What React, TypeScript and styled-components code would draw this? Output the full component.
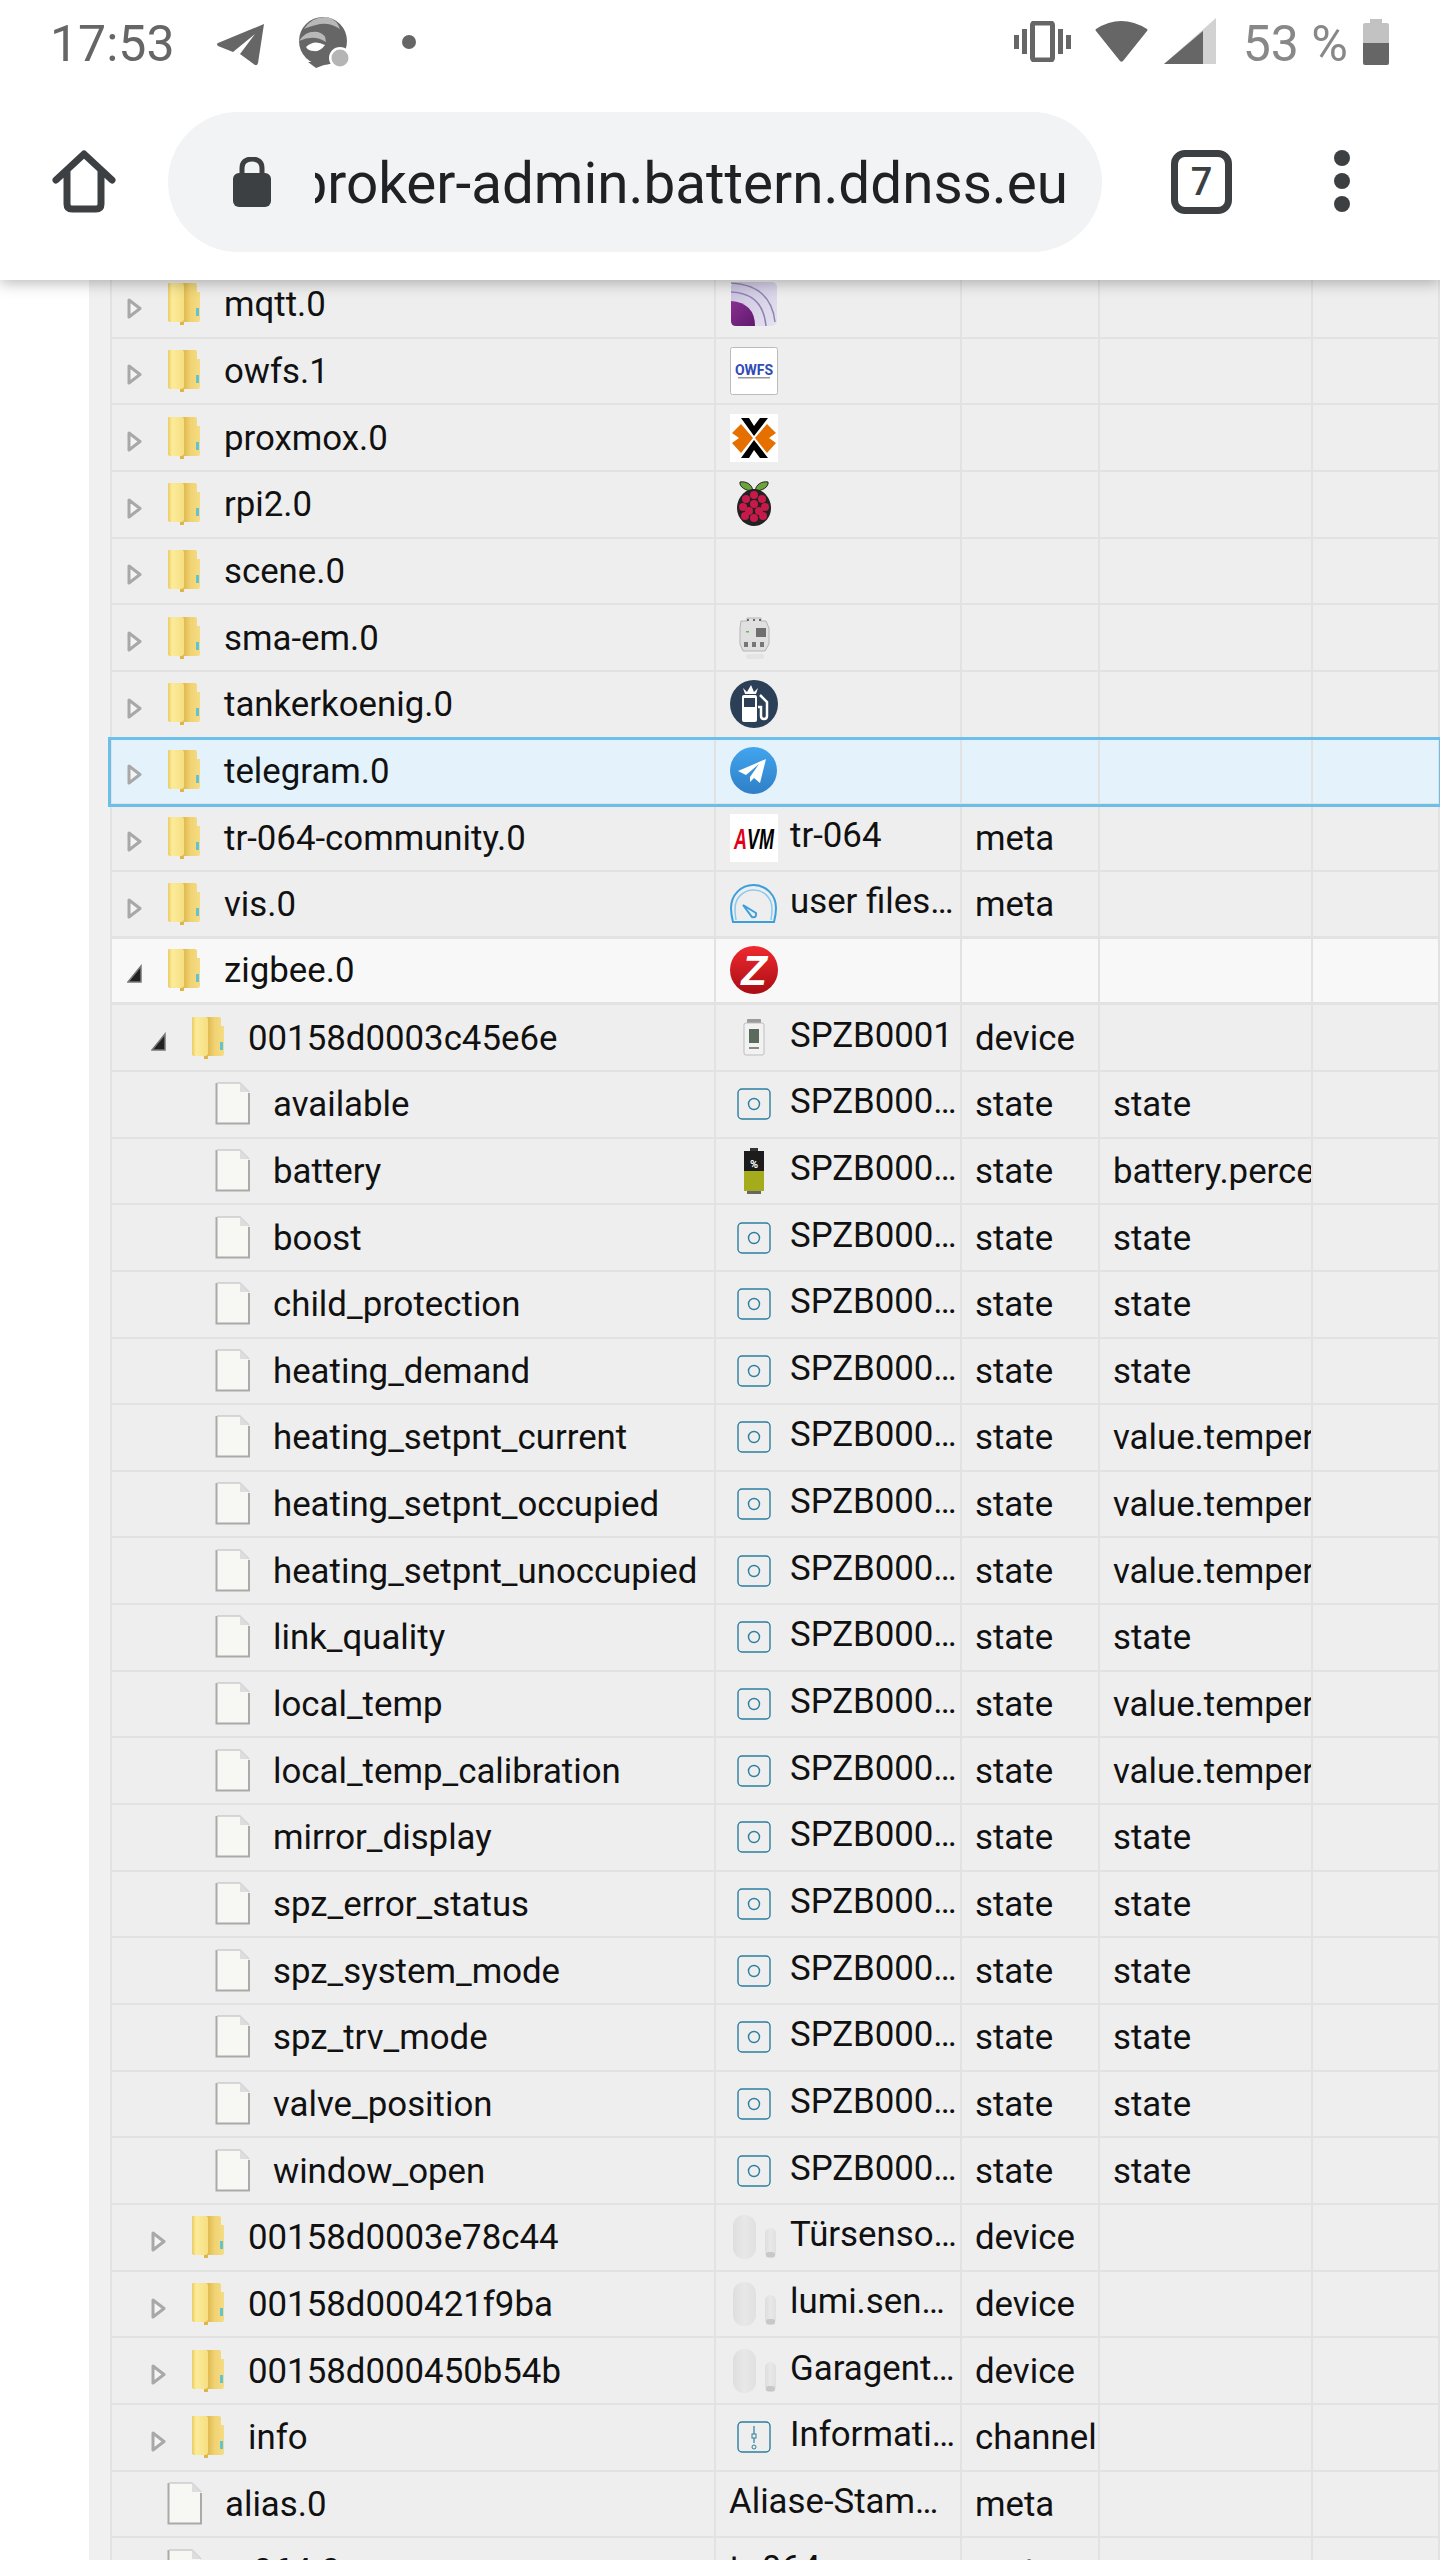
import React from "react";
import styled, { createGlobalStyle } from "styled-components";

const GlobalStyle = createGlobalStyle`
  html, body {
    margin: 0;
    padding: 0;
    background: #fff;
  }
  body {
    font-family: Roboto, "Liberation Sans", sans-serif;
  }
`;

const Page = styled.div`
  width: 1440px;
  height: 2560px;
  overflow: hidden;
  background: #fff;
`;

const Header = styled.header`
  position: relative;
  z-index: 5;
  height: 280px;
  background: #fff;
  box-shadow: 0 3px 14px rgba(0, 0, 0, 0.28);
`;

const StatusBar = styled.div`
  height: 88px;
  display: flex;
  justify-content: space-between;
  align-items: flex-start;
  padding: 0 51px 0 50px;
`;

const StatusGroup = styled.div`
  display: flex;
  align-items: flex-start;
`;

const StatusIcon = styled.svg<{ $left: number; $top: number }>`
  display: block;
  margin-left: ${(p) => p.$left}px;
  margin-top: ${(p) => p.$top}px;
`;

const Time = styled.span`
  font-size: 50px;
  line-height: 56px;
  margin-top: 16px;
  color: #666;
  width: 120px;
`;

const Percent = styled.span`
  font-size: 50px;
  line-height: 56px;
  margin-top: 16px;
  margin-left: 27px;
  color: #888;
  white-space: pre;
`;

const Toolbar = styled.div`
  height: 192px;
  display: flex;
  align-items: flex-start;
  padding: 24px 0 0 52px;
`;

const HomeButton = styled.svg`
  display: block;
  width: 64px;
  height: 64px;
  margin-top: 38px;
`;

const UrlBar = styled.div`
  width: 934px;
  height: 140px;
  margin-left: 52px;
  border-radius: 70px;
  background: #f1f3f4;
  display: flex;
  align-items: center;
  padding-left: 65px;
  box-sizing: border-box;
`;

const Lock = styled.svg`
  display: block;
  flex: none;
`;

const UrlClip = styled.div`
  width: 753px;
  margin: 3px 0 0 44px;
  display: flex;
  justify-content: flex-end;
  overflow: hidden;
`;

const UrlText = styled.span`
  flex: none;
  font-size: 56.6px;
  line-height: 70px;
  color: #202124;
  white-space: nowrap;
`;

const TabCount = styled.div`
  width: 61px;
  height: 64px;
  margin: 38px 0 0 69px;
  box-sizing: border-box;
  border: 7px solid #3c4043;
  border-radius: 14px;
  display: flex;
  align-items: center;
  justify-content: center;
  font-size: 38px;
  font-weight: 500;
  color: #3c4043;
`;

const MenuDots = styled.div`
  margin: 38px 0 0 102px;
  display: flex;
  flex-direction: column;
  gap: 7px;
`;

const MenuDot = styled.span`
  display: block;
  width: 16px;
  height: 16px;
  border-radius: 50%;
  background: #3c4043;
`;

const TableArea = styled.main`
  margin: -8px 0 0 89px;
  padding-left: 21px;
  background: #f0f0f0;
`;

const Row = styled.div<{ $kind?: "selected" | "open" }>`
  height: 66.67px;
  box-sizing: border-box;
  display: grid;
  grid-template-columns: 604px 246px 138px 213px 1fr;
  color: #111;
  font-size: 34.8px;
  background: ${(p) =>
    p.$kind === "selected" ? "#e3f2fb" : p.$kind === "open" ? "#f8f8f8" : "#eeeeee"};
  border-bottom: 2px solid #e2e2e2;
  border-left: 2px solid #e2e2e2;
  ${(p) =>
    p.$kind === "selected"
      ? "position: relative; z-index: 1; outline: 3px solid #6bbfe9; outline-offset: -1px;"
      : ""}
  ${(p) =>
    p.$kind === "open"
      ? "border-bottom-width: 3px; box-shadow: 0 -3px 0 #e2e2e2;"
      : ""}
`;

const Cell = styled.div`
  border-right: 2px solid #e2e2e2;
  min-width: 0;
  display: flex;
  align-items: center;
  overflow: hidden;
  white-space: nowrap;
`;

const NameCell = styled(Cell)<{ $level: number }>`
  padding-left: ${(p) => 15 + p.$level * 24}px;
`;

const TitleCell = styled(Cell)`
  padding-left: 13px;
`;

const TextCell = styled(Cell)`
  padding-left: 13px;
`;

const ArrowSlot = styled.span`
  flex: none;
  width: 40px;
  height: 24px;
  margin-top: 8px;
  display: flex;
  align-items: center;
`;

const TreeIcon = styled.svg`
  flex: none;
  display: block;
  margin-top: -1px;
`;

const NameText = styled.span`
  margin-left: 23px;
`;

const IconSlot = styled.span`
  flex: none;
  width: 49px;
  height: 48px;
  margin-right: 12px;
  display: flex;
  align-items: center;
  justify-content: center;
`;

const TitleText = styled.span`
  margin-top: -6px;
`;

const Arrow = ({ open }: { open?: boolean }) =>
  open ? (
    <svg width="16" height="20" viewBox="0 0 16 20">
      <path d="M14 2V18H1Z" fill="#222" stroke="#777" strokeWidth="1.5" />
    </svg>
  ) : (
    <svg width="15" height="21" viewBox="0 0 15 21">
      <path d="M2 2L13 10.5L2 19Z" fill="#f4f4f4" stroke="#a8a8a8" strokeWidth="3" strokeLinejoin="round" />
    </svg>
  );

const Folder = () => (
  <TreeIcon width="34" height="43" viewBox="0 0 34 43">
    <defs>
      <linearGradient id="folderBack" x1="0" x2="1" y1="0" y2="0">
        <stop offset="0" stopColor="#eccb62" />
        <stop offset="0.25" stopColor="#fbeb9a" />
        <stop offset="1" stopColor="#f6df82" />
      </linearGradient>
      <linearGradient id="folderFront" x1="0" x2="1" y1="0" y2="0">
        <stop offset="0.45" stopColor="#dcb448" />
        <stop offset="0.7" stopColor="#f0d272" />
        <stop offset="1" stopColor="#f5dc84" />
      </linearGradient>
    </defs>
    <path d="M3 1H28Q30 1 30 3V10H33V38Q33 40 31 40H17V43H13V40H4Q1 40 1 37V3Q1 1 3 1Z" fill="url(#folderFront)" />
    <path d="M3 1H15Q17 1 17 4V37Q17 40 14 40H4Q1 40 1 37V3Q1 1 3 1Z" fill="url(#folderBack)" />
    <rect x="29" y="26" width="3" height="8" fill="#62c3d6" />
  </TreeIcon>
);

const FileIcon = () => (
  <TreeIcon width="35" height="43" viewBox="0 0 35 43">
    <path d="M2 1H25L34 10V41H2Z" fill="#f7f8f4" />
    <path d="M1.500 1V41.500H34V11" fill="none" stroke="#aaa" strokeWidth="2" />
    <path d="M2 1H25L34 10" fill="none" stroke="#ccc" strokeWidth="1.5" />
    <path d="M25 1V10H34Z" fill="#ddd" />
  </TreeIcon>
);

const Mqtt = () => (
  <svg width="46" height="44" viewBox="0 0 46 44">
    <defs>
      <linearGradient id="mqttBg" x1="0" x2="1" y1="0" y2="1">
        <stop offset="0" stopColor="#c8c0de" />
        <stop offset="1" stopColor="#e6e2f0" />
      </linearGradient>
      <linearGradient id="mqttArc" x1="0" x2="1" y1="0" y2="1">
        <stop offset="0" stopColor="#8a2f92" />
        <stop offset="1" stopColor="#5f1a6c" />
      </linearGradient>
    </defs>
    <rect width="46" height="44" rx="5" fill="url(#mqttBg)" />
    <path d="M0 19Q24 21 24 44H5Q0 44 0 39Z" fill="url(#mqttArc)" />
    <path d="M0 10Q32 11 35 44M0 1Q40 3 44 40" fill="none" stroke="#8d84ac" strokeWidth="1.5" />
  </svg>
);

const Owfs = () => (
  <svg width="48" height="48" viewBox="0 0 48 48">
    <rect x="0.5" y="0.5" width="47" height="47" rx="2" fill="#fff" stroke="#bbb" />
    <text x="24" y="28" textAnchor="middle" fontFamily="Roboto" fontSize="14" fontWeight="700" fill="#2f4bb5">
      OWFS
    </text>
    <rect x="8" y="30" width="32" height="1.5" fill="#999" />
  </svg>
);

const Proxmox = () => (
  <svg width="48" height="48" viewBox="0 0 48 48">
    <rect width="48" height="48" fill="#fff" />
    <path d="M11 4H19L24 12L30 4H38L24 22ZM11 44H19L24 36L30 44H38L24 26Z" fill="#000" />
    <path d="M2 19L11 10L23 24L11 39L2 29L9 24ZM46 19L37 10L25 24L37 39L46 29L39 24Z" fill="#e57000" />
  </svg>
);

const Raspberry = () => (
  <svg width="36" height="46" viewBox="0 0 36 46">
    <path d="M17 10C10 10 3 6 4 1C10 0 16 3 17 10ZM19 10C26 10 33 6 32 1C26 0 20 3 19 10Z" fill="#6ba43a" stroke="#222" strokeWidth="1" />
    <path d="M18 8C8 8 1 18 1 27C1 38 10 45 18 45C26 45 35 38 35 27C35 18 28 8 18 8Z" fill="#222" />
    {[
      [18, 14], [10, 18], [26, 18], [18, 23], [7, 26], [29, 26], [13, 30], [23, 30], [18, 37], [9, 35], [27, 35],
    ].map(([x, y]) => (
      <circle key={`${x}-${y}`} cx={x} cy={y} r="4" fill="#c51a4a" />
    ))}
  </svg>
);

const SmaMeter = () => (
  <svg width="32" height="44" viewBox="0 0 32 44">
    <path d="M3 5H9V2H23V5H28L31 12V28L27 35H5L2 28V12Z" fill="#e0e0e0" stroke="#b5b5b5" />
    <rect x="18" y="12" width="10" height="9" fill="#6f6f6f" />
    <circle cx="10" cy="4" r="1" fill="#444" />
    <circle cx="16" cy="4" r="1" fill="#444" />
    <circle cx="22" cy="4" r="1" fill="#444" />
    <rect x="8" y="15" width="3" height="1.5" fill="#56c25b" />
    <path d="M6 26H10V31H6ZM14 26H18V31H14ZM22 26H26V31H22Z" fill="#777" />
    <rect x="8" y="38" width="18" height="5" rx="2" fill="#e4e4e4" />
  </svg>
);

const Tanker = () => (
  <svg width="48" height="48" viewBox="0 0 48 48">
    <circle cx="24" cy="24" r="24" fill="#2b3f56" />
    <path d="M13 8L15 14H26L28 8L24 12L21 5L17 12Z" fill="#fff" />
    <rect x="12" y="15" width="15" height="27" rx="2" fill="#fff" />
    <rect x="14" y="18" width="11" height="9" fill="#2b3f56" />
    <path d="M30 15L37 22V36Q37 39 34 39Q31 39 31 36V27H28" fill="none" stroke="#fff" strokeWidth="2.5" />
  </svg>
);

const Telegram = () => (
  <svg width="47" height="47" viewBox="0 0 47 47">
    <defs>
      <linearGradient id="tgBlue" x1="0" x2="0" y1="0" y2="1">
        <stop offset="0" stopColor="#41a5ed" />
        <stop offset="1" stopColor="#2f7fc7" />
      </linearGradient>
    </defs>
    <circle cx="23.5" cy="23.5" r="23.5" fill="url(#tgBlue)" />
    <path d="M36 12L8 24L16 28L29 17L20 30L20 35L24 31L30 36Z" fill="#fff" />
  </svg>
);

const Avm = () => (
  <svg width="48" height="48" viewBox="0 0 48 48">
    <rect width="48" height="48" fill="#fff" />
    <text transform="translate(4 35) scale(0.6 1)" fontFamily="Liberation Sans" fontSize="30" fontWeight="700" fontStyle="italic">
      <tspan fill="#e2001a">A</tspan>
      <tspan fill="#000">VM</tspan>
    </text>
  </svg>
);

const Gauge = () => (
  <svg width="47" height="40" viewBox="0 0 47 40">
    <path d="M3 38Q1 30 1 24C1 11 11 1 23.500 1S46 11 46 24Q46 30 44 38Z" fill="none" stroke="#3a9fdd" strokeWidth="2" />
    <path d="M6 36Q5 30 5 25C5 14 13 6 23.500 6S42 14 42 25Q42 30 41 36" fill="none" stroke="#8cc9ec" strokeWidth="1.5" />
    <path d="M13 21L26 29Q27 34 22 33Z" fill="none" stroke="#3a9fdd" strokeWidth="2" />
  </svg>
);

const Zigbee = () => (
  <svg width="48" height="48" viewBox="0 0 48 48">
    <defs>
      <linearGradient id="zbRed" x1="0" x2="0" y1="0" y2="1">
        <stop offset="0" stopColor="#ef2a2f" />
        <stop offset="1" stopColor="#a80d14" />
      </linearGradient>
    </defs>
    <circle cx="24" cy="24" r="24" fill="url(#zbRed)" />
    <text x="24" y="39" textAnchor="middle" fontFamily="Liberation Sans" fontSize="42" fontWeight="700" fontStyle="italic" fill="#fff">
      Z
    </text>
  </svg>
);

const Thermostat = () => (
  <svg width="24" height="37" viewBox="0 0 24 37">
    <rect x="5" y="0" width="14" height="5" rx="1" fill="#9a9a9a" />
    <rect x="2" y="4" width="20" height="32" rx="2" fill="#f2f2f2" stroke="#bdbdbd" />
    <rect x="7" y="10" width="10" height="14" fill="#5b6b5b" />
    <rect x="7" y="28" width="10" height="2" fill="#888" />
  </svg>
);

const StateIcon = () => (
  <svg width="34" height="32" viewBox="0 0 34 32">
    <rect x="1" y="1" width="32" height="30" rx="4" fill="none" stroke="#2b7f9e" strokeWidth="1.4" />
    <circle cx="17" cy="16" r="5.500" fill="none" stroke="#2b7f9e" strokeWidth="1.4" />
  </svg>
);

const ChannelIcon = () => (
  <svg width="34" height="32" viewBox="0 0 34 32">
    <rect x="1" y="1" width="32" height="30" rx="4" fill="none" stroke="#2b7f9e" strokeWidth="1.4" />
    <path d="M17 5V22" stroke="#2b7f9e" strokeWidth="1.2" />
    <rect x="15" y="13" width="4" height="4" fill="#eee" stroke="#2b7f9e" />
    <circle cx="17" cy="26" r="2" fill="none" stroke="#2b7f9e" />
  </svg>
);

const BatteryIcon = () => (
  <svg width="22" height="46" viewBox="0 0 22 46">
    <rect x="7" y="0" width="8" height="3" fill="#333" />
    <rect x="1" y="3" width="20" height="20" fill="#1c1c1c" />
    <rect x="1" y="23" width="20" height="20" fill="#a5ac1c" />
    <rect x="4" y="43" width="14" height="3" fill="#666" />
    <text x="11" y="20" textAnchor="middle" fontFamily="Roboto" fontSize="11" fontWeight="700" fill="#fff">
      %
    </text>
  </svg>
);

const DoorSensor = () => (
  <svg width="46" height="46" viewBox="0 0 46 46">
    <defs>
      <linearGradient id="doorPill" x1="0" x2="1" y1="0" y2="0">
        <stop offset="0" stopColor="#dedede" />
        <stop offset="0.5" stopColor="#e8e8e8" />
        <stop offset="1" stopColor="#e0e0e0" />
      </linearGradient>
    </defs>
    <rect x="2" y="1" width="23" height="44" rx="11" fill="url(#doorPill)" />
    <rect x="34" y="14" width="11" height="30" rx="5.500" fill="url(#doorPill)" />
    <rect x="35" y="38" width="9" height="5.500" rx="2.500" fill="#c8c8c8" />
  </svg>
);

const icons = {
  mqtt: Mqtt,
  owfs: Owfs,
  proxmox: Proxmox,
  rpi: Raspberry,
  sma: SmaMeter,
  tanker: Tanker,
  telegram: Telegram,
  avm: Avm,
  gauge: Gauge,
  zigbee: Zigbee,
  thermostat: Thermostat,
  state: StateIcon,
  channel: ChannelIcon,
  battery: BatteryIcon,
  door: DoorSensor,
};

type RowData = {
  name: string;
  level: number;
  node?: "closed" | "open" | "file";
  icon?: keyof typeof icons;
  title?: string;
  type?: string;
  role?: string;
  kind?: "selected" | "open";
};

const state = (name: string, role = "state", icon: keyof typeof icons = "state"): RowData => ({
  name,
  level: 2,
  node: "file",
  icon,
  title: "SPZB000…",
  type: "state",
  role,
});

const device = (name: string, title: string): RowData => ({
  name,
  level: 1,
  icon: "door",
  title,
  type: "device",
});

const rows: RowData[] = [
  { name: "mqtt.0", level: 0, icon: "mqtt" },
  { name: "owfs.1", level: 0, icon: "owfs" },
  { name: "proxmox.0", level: 0, icon: "proxmox" },
  { name: "rpi2.0", level: 0, icon: "rpi" },
  { name: "scene.0", level: 0 },
  { name: "sma-em.0", level: 0, icon: "sma" },
  { name: "tankerkoenig.0", level: 0, icon: "tanker" },
  { name: "telegram.0", level: 0, icon: "telegram", kind: "selected" },
  { name: "tr-064-community.0", level: 0, icon: "avm", title: "tr-064", type: "meta" },
  { name: "vis.0", level: 0, icon: "gauge", title: "user files…", type: "meta" },
  { name: "zigbee.0", level: 0, node: "open", icon: "zigbee", kind: "open" },
  { name: "00158d0003c45e6e", level: 1, node: "open", icon: "thermostat", title: "SPZB0001", type: "device" },
  state("available"),
  state("battery", "battery.percent", "battery"),
  state("boost"),
  state("child_protection"),
  state("heating_demand"),
  state("heating_setpnt_current", "value.temperature"),
  state("heating_setpnt_occupied", "value.temperature"),
  state("heating_setpnt_unoccupied", "value.temperature"),
  state("link_quality"),
  state("local_temp", "value.temperature"),
  state("local_temp_calibration", "value.temperature"),
  state("mirror_display"),
  state("spz_error_status"),
  state("spz_system_mode"),
  state("spz_trv_mode"),
  state("valve_position"),
  state("window_open"),
  device("00158d0003e78c44", "Türsenso…"),
  device("00158d000421f9ba", "lumi.sen…"),
  device("00158d000450b54b", "Garagent…"),
  { name: "info", level: 1, icon: "channel", title: "Informati…", type: "channel" },
  { name: "alias.0", level: 0, node: "file", title: "Aliase-Stam…", type: "meta" },
  { name: "a.064.0", level: 0, node: "file", title: "tr-064", type: "meta" },
];

const TreeRow = ({ row }: { row: RowData }) => {
  const node = row.node ?? "closed";
  const Icon = row.icon ? icons[row.icon] : null;
  return (
    <Row $kind={row.kind}>
      <NameCell $level={row.level}>
        <ArrowSlot>{node !== "file" && <Arrow open={node === "open"} />}</ArrowSlot>
        {node === "file" ? <FileIcon /> : <Folder />}
        <NameText>{row.name}</NameText>
      </NameCell>
      <TitleCell>
        {Icon && (
          <IconSlot>
            <Icon />
          </IconSlot>
        )}
        {row.title && <TitleText>{row.title}</TitleText>}
      </TitleCell>
      <TextCell>{row.type}</TextCell>
      <TextCell>{row.role}</TextCell>
      <Cell />
    </Row>
  );
};

export default function App() {
  return (
    <Page>
      <GlobalStyle />
      <Header>
        <StatusBar>
          <StatusGroup>
            <Time>17:53</Time>
            <StatusIcon $left={47} $top={23} width="48" height="42" viewBox="0 0 48 42">
              <path d="M47 1L1 20Q-1 21 1 23L16 29L38 11L23 31L38 42Q40 43 41 40Z" fill="#666" />
            </StatusIcon>
            <StatusIcon $left={33} $top={15} width="52" height="53" viewBox="0 0 52 53">
              <circle cx="25" cy="26" r="24" fill="#666" />
              <path d="M6 14Q14 1 30 2Q39 5 42 14Q30 6 18 10Q10 12 6 14Z" fill="#b8b8b8" />
              <path d="M1 26Q8 15 20 17Q28 19 28 27Q16 19 1 26Z" fill="#b8b8b8" />
              <path d="M8 32Q16 24 27 30Q22 37 16 36Q10 36 8 32Z" fill="#fff" />
              <path d="M10 47L18 53L34 47Z" fill="#666" />
              <circle cx="42" cy="43" r="11" fill="#fff" />
              <circle cx="42" cy="43" r="8.500" fill="#b5b5b5" />
            </StatusIcon>
            <StatusIcon $left={52} $top={35} width="14" height="14" viewBox="0 0 14 14">
              <circle cx="7" cy="7" r="7" fill="#666" />
            </StatusIcon>
          </StatusGroup>
          <StatusGroup>
            <StatusIcon $left={0} $top={21} width="57" height="41" viewBox="0 0 57 41">
              <rect x="18.500" y="2" width="20" height="37" rx="2" fill="none" stroke="#666" strokeWidth="5" />
              <rect x="0" y="14" width="5" height="14" fill="#666" />
              <rect x="8" y="8" width="5" height="25" fill="#666" />
              <rect x="44" y="8" width="5" height="25" fill="#666" />
              <rect x="52" y="14" width="5" height="14" fill="#666" />
            </StatusIcon>
            <StatusIcon $left={24} $top={19} width="53" height="43" viewBox="0 0 53 43">
              <path d="M1 10Q26 -6 52 10Q53 11 52 12L28 42Q26.500 43.500 25 42L1 12Q0 11 1 10Z" fill="#666" />
            </StatusIcon>
            <StatusIcon $left={16} $top={18} width="52" height="46" viewBox="0 0 52 46">
              <path d="M52 0V46H0Z" fill="#d2d2d2" />
              <path d="M39 13V46H0Z" fill="#666" />
            </StatusIcon>
            <Percent>53 %</Percent>
            <StatusIcon $left={15} $top={19} width="26" height="46" viewBox="0 0 26 46">
              <path d="M7 0H19V4H24Q26 4 26 6V24H0V6Q0 4 2 4H7Z" fill="#c2c2c2" />
              <path d="M0 24H26V44Q26 46 24 46H2Q0 46 0 44Z" fill="#666" />
            </StatusIcon>
          </StatusGroup>
        </StatusBar>
        <Toolbar>
          <HomeButton viewBox="0 0 64 64">
            <path
              d="M4 30L32 4L60 30M15 21V54Q15 59 20 59H44Q49 59 49 54V21"
              fill="none"
              stroke="#3c4043"
              strokeWidth="7"
              strokeLinecap="round"
              strokeLinejoin="round"
            />
          </HomeButton>
          <UrlBar>
            <Lock width="38" height="50" viewBox="0 0 38 50">
              <path d="M9 18V11C9 5 13 2 19 2S29 5 29 11V18" fill="none" stroke="#3c4043" strokeWidth="5" />
              <rect x="0" y="16" width="38" height="34" rx="6" fill="#3c4043" />
            </Lock>
            <UrlClip>
              <UrlText>iobroker-admin.battern.ddnss.eu</UrlText>
            </UrlClip>
          </UrlBar>
          <TabCount>7</TabCount>
          <MenuDots>
            <MenuDot />
            <MenuDot />
            <MenuDot />
          </MenuDots>
        </Toolbar>
      </Header>
      <TableArea>
        {rows.map((row) => (
          <TreeRow key={row.name} row={row} />
        ))}
      </TableArea>
    </Page>
  );
}
